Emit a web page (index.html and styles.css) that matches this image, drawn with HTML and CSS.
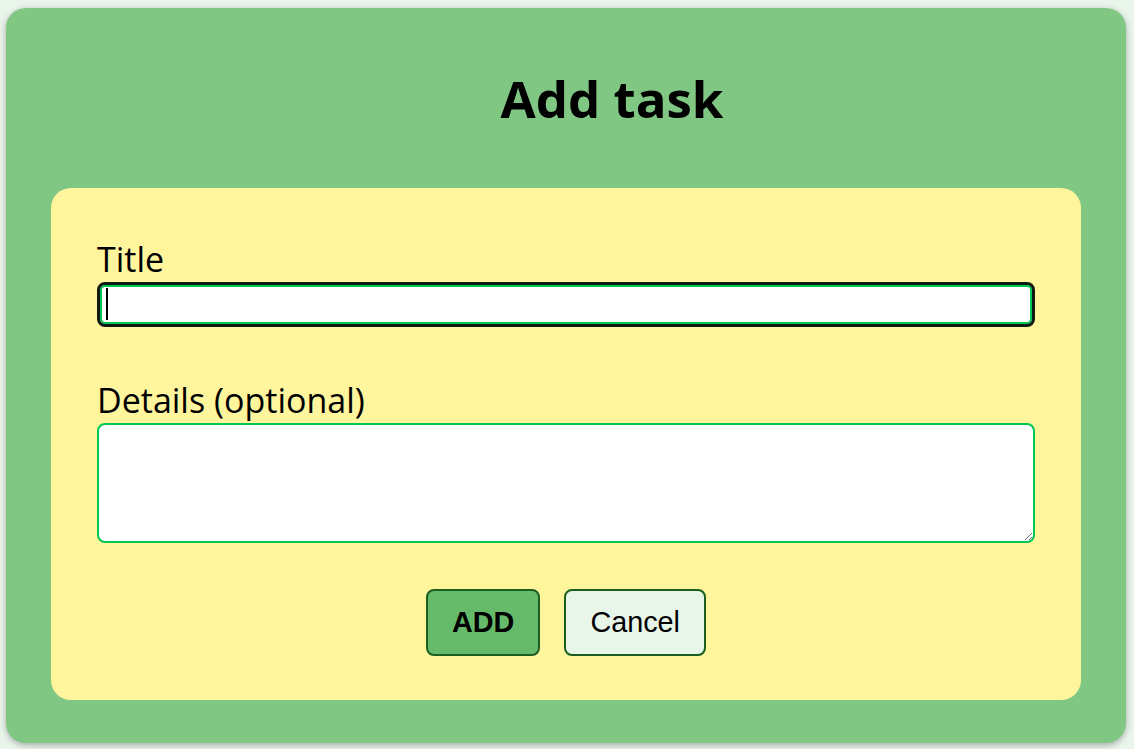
FILE: index.html
```html
<!DOCTYPE html>
<html lang="en">
<head>
<meta charset="utf-8">
<title>Add task</title>
<link rel="stylesheet" href="styles.css">
</head>
<body>
<main class="card">
  <h1 class="heading">Add task</h1>
  <form class="form">
    <label class="label" for="title">Title</label>
    <div class="input-wrap">
      <input class="field field-focus" id="title" type="text">
      <span class="caret"></span>
    </div>
    <label class="label label-gap" for="details">Details (optional)</label>
    <textarea class="field area" id="details"></textarea>
    <div class="actions">
      <button type="button" class="btn btn-add">ADD</button>
      <button type="button" class="btn btn-cancel">Cancel</button>
    </div>
  </form>
</main>
</body>
</html>
```
FILE: styles.css
```css
html, body {
  margin: 0;
  height: 100%;
}
body {
  background: #e9f4eb;
  padding: 8px 8px 6px 6px;
  box-sizing: border-box;
  font-family: "Open Sans", "Noto Sans", sans-serif;
}
.card {
  background: #81c784;
  border-radius: 20px;
  box-shadow: 0 2px 6px rgba(0, 0, 0, 0.3);
  padding: 0 45px 43px 45px;
  height: 735px;
  box-sizing: border-box;
  display: flex;
  flex-direction: column;
}
.heading {
  margin: 0;
  height: 180px;
  flex-shrink: 0;
  display: flex;
  align-items: center;
  justify-content: center;
  padding-left: 92px;
  padding-bottom: 0;
  box-sizing: border-box;
  font-size: 51px;
  font-weight: 700;
  color: #000;
}
.form {
  background: #fff59d;
  border-radius: 20px;
  padding: 46px 46px 45px 46px;
  display: flex;
  flex-direction: column;
  flex: 1;
  min-height: 0;
}
.label {
  font-size: 34px;
  line-height: 40px;
  color: #000;
  display: block;
  margin-top: 5px;
  margin-bottom: 3px;
}
.label-gap {
  margin-top: 53px;
}
.input-wrap {
  position: relative;
}
.caret {
  position: absolute;
  left: 9px;
  top: 6px;
  width: 2px;
  height: 32px;
  background: #000;
}
.field {
  box-sizing: border-box;
  width: 100%;
  margin: 0;
  border: 2px solid #00c853;
  border-radius: 8px;
  background: #fff;
  font-size: 20px;
}
.field-focus {
  display: block;
  height: 45px;
  border: 3px solid #0f1a12;
  box-shadow: inset 0 0 0 2px #00c853;
  padding: 0 6px;
  outline: none;
}
.area {
  height: 120px;
  flex-shrink: 0;
  resize: vertical;
  display: block;
}
.actions {
  margin-top: 46px;
  display: flex;
  justify-content: center;
  gap: 24px;
}
.btn {
  font-family: "Liberation Sans", Arial, sans-serif;
  font-size: 28.8px;
  padding: 15px 24px;
  border: 2px solid #1b5e20;
  border-radius: 8px;
  color: #000;
  line-height: 1.15;
}
.btn-add {
  background: #66bb6a;
  font-weight: 700;
}
.btn-cancel {
  background: #e8f5e9;
}
```
